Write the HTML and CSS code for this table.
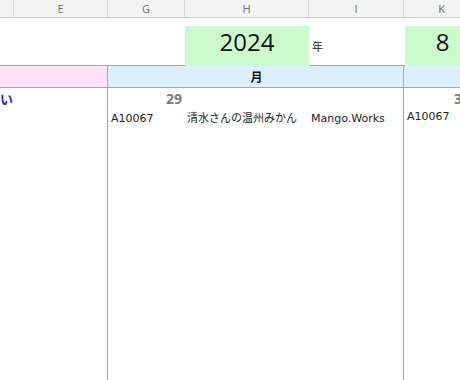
FILE: index.html
```html
<!DOCTYPE html>
<html lang="ja">
<head>
<meta charset="utf-8">
<link rel="stylesheet" href="styles.css">
</head>
<body>
<div class="sheet">
  <div class="row colhead">
    <div class="ch"></div>
    <div class="ch">E</div>
    <div class="ch">G</div>
    <div class="ch">H</div>
    <div class="ch">I</div>
    <div class="ch">K</div>
  </div>
  <div class="row gap1"></div>
  <div class="row yearrow">
    <div></div>
    <div></div>
    <div></div>
    <div class="green year">2024</div>
    <div class="unit">年</div>
    <div class="green month">8</div>
  </div>
  <div class="row gap2"></div>
  <div class="row dayrow">
    <div class="pink span2"></div>
    <div class="blue span3 wd">月</div>
    <div class="blue next"></div>
  </div>
  <div class="row body">
    <div class="left span2"><span class="prev">い</span></div>
    <div class="day span3">
      <div class="dnum">29</div>
      <div class="entry">
        <span class="c1">A10067</span>
        <span class="c2">清水さんの温州みかん</span>
        <span class="c3">Mango.Works</span>
      </div>
    </div>
    <div class="day next">
      <div class="dnum partial">3</div>
      <div class="entry"><span class="c4">A10067</span></div>
    </div>
  </div>
</div>
</body>
</html>
```
FILE: styles.css
```css
html, body {
  margin: 0;
  padding: 0;
  background: #fff;
  overflow: hidden;
}
.sheet {
  width: 460px;
  height: 380px;
  overflow: hidden;
  font-family: "DejaVu Sans", "Noto Sans CJK JP", sans-serif;
  color: #222;
}
.row {
  display: grid;
  grid-template-columns: 14px 94px 77px 124px 95px 76px;
  width: 480px;
}
.span2 { grid-column: span 2; }
.span3 { grid-column: span 3; }

.colhead {
  height: 18px;
  background: #f4f4f4;
  border-bottom: 1px solid #cdcdcd;
  box-sizing: border-box;
}
.ch {
  font-family: "Open Sans", "DejaVu Sans", sans-serif;
  font-size: 11px;
  color: #707070;
  text-align: center;
  line-height: 17px;
  border-right: 1px solid #dadada;
}
.gap1 { height: 8px; }
.yearrow { height: 32px; }
.green {
  background: #ccfacc;
  font-family: "Open Sans", "DejaVu Sans", sans-serif;
  font-size: 24px;
  line-height: 32px;
  text-align: center;
  color: #111;
}
.month { margin-left: 1px; }
.unit {
  font-family: "Noto Sans CJK JP", sans-serif;
  font-size: 11px;
  line-height: 40px;
  padding-left: 3px;
  color: #222;
}
.gap2 { height: 7px; }
.dayrow {
  height: 23px;
  border-top: 1px solid #a9a9a9;
  border-bottom: 1px solid #a9a9a9;
  box-sizing: border-box;
}
.pink { background: #fde2f7; border-right: 1px solid #a9a9a9; }
.blue { background: #dcefff; }
.wd {
  font-family: "Noto Sans CJK JP", sans-serif;
  font-weight: bold;
  font-size: 12px;
  line-height: 21px;
  text-align: center;
  border-right: 1px solid #a9a9a9;
  color: #111;
  padding-left: 2px;
}
.body { height: 293px; }
.left { border-right: 1px solid #a9a9a9; }
.prev {
  display: block;
  font-family: "Noto Sans CJK JP", sans-serif;
  font-weight: bold;
  font-size: 13px;
  color: #2626c8;
  line-height: 22px;
}
.day { border-right: 1px solid #a9a9a9; overflow: hidden; }
.dnum {
  font-family: "Open Sans", "DejaVu Sans", sans-serif;
  font-weight: bold;
  font-size: 14px;
  color: #7a7a7a;
  line-height: 20px;
  width: 74px;
  text-align: right;
  margin-top: 1px;
}
.partial { width: 58px; }
.entry {
  display: grid;
  grid-template-columns: 76px 124px 95px;
  align-items: baseline;
  font-size: 11px;
  line-height: 16px;
  color: #222;
}
.next .entry { grid-template-columns: 76px; }
.c1, .c2, .c3, .c4 { padding-left: 3px; white-space: nowrap; }
.c2 { font-family: "Noto Sans CJK JP", sans-serif; }
```
